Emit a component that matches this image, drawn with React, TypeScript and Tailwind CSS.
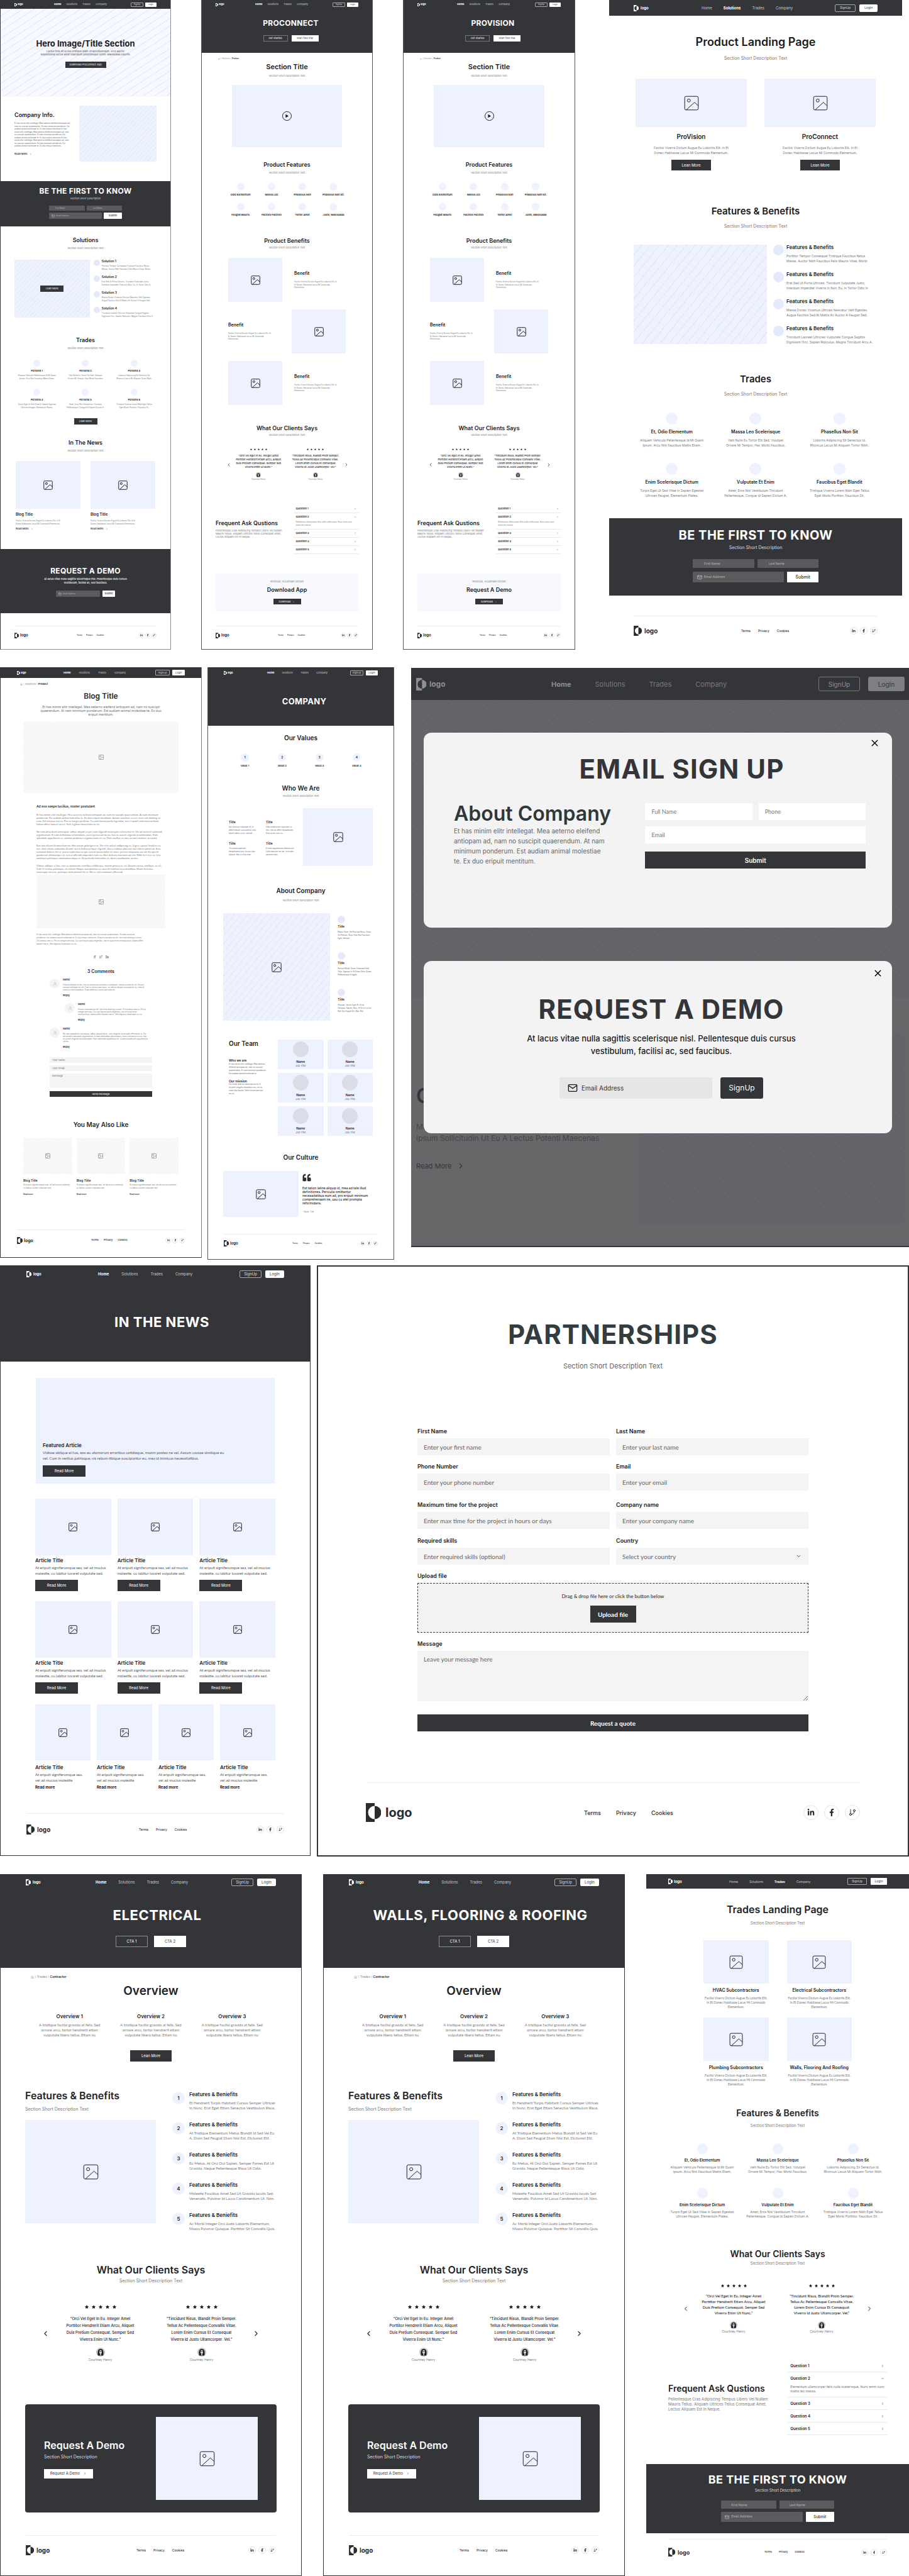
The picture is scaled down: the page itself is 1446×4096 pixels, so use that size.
import React from "react";
import { FiChevronDown, FiChevronLeft, FiChevronRight, FiChevronUp, FiFacebook, FiGitBranch, FiHome, FiLinkedin, FiMail, FiTwitter, FiUser, FiX } from "react-icons/fi";
import { FaFacebookF, FaLinkedinIn, FaPlay, FaQuoteLeft, FaStar } from "react-icons/fa";

/* ---------- size themes, one per artboard width ---------- */

type Theme = {
  bar: string; brand: string; mark: string; word: string; links: string; signup: string; login: string; actions: string;
  foot: string; footRow: string; footBrand: string; footMark: string; footWord: string; footLinks: string; social: string; socials: string;
};

const T272: Theme = {
  bar: "h-[14px] px-[22px]", brand: "w-[63px] gap-[1px]", mark: "w-[4px] h-[5px]", word: "text-[4px]", links: "gap-[8px] text-[4px] leading-[6px]",
  signup: "w-[20px] h-[7px] text-[3px] rounded-[1px]", login: "w-[18px] h-[7px] text-[3px] rounded-[1px]", actions: "gap-[3px]",
  foot: "mx-[22px] pt-[9px] pb-[17px]", footRow: "h-[10px]", footBrand: "w-[99px] gap-[2px]", footMark: "w-[7px] h-[9px]", footWord: "text-[6px]",
  footLinks: "gap-[6px] text-[3px]", social: "size-[8px] text-[4px]", socials: "gap-[2px]",
};
const T297: Theme = {
  ...T272,
  bar: "h-[17px] px-[25px]", brand: "w-[69px] gap-[1px]", mark: "w-[5px] h-[6px]", links: "gap-[12px] text-[4px] leading-[6px]",
  signup: "w-[21px] h-[8px] text-[4px] rounded-[1px]", login: "w-[19px] h-[8px] text-[4px] rounded-[1px]", actions: "gap-[4px]",
  foot: "mx-[25px] pt-[9px] pb-[20px]", footBrand: "w-[109px] gap-[2px]", footMark: "w-[8px] h-[10px]", footLinks: "gap-[8px] text-[3px]",
};
const T321: Theme = {
  ...T297,
  bar: "h-[17px] px-[26px]", brand: "w-[74px] gap-[1px]", links: "gap-[13px] text-[4px] leading-[6px]",
  signup: "w-[23px] h-[9px] text-[4px] rounded-[1px]", login: "w-[20px] h-[9px] text-[4px] rounded-[1px]",
  foot: "mx-[26px] pt-[10px] pb-[21px]", footRow: "h-[12px]", footBrand: "w-[118px] gap-[2px]", footMark: "w-[9px] h-[11px]", footWord: "text-[7px]",
  footLinks: "gap-[8px] text-[4px]", social: "size-[9px] text-[4px]",
};
const T418: Theme = {
  bar: "h-[23px] px-[35px]", brand: "w-[97px] gap-[2px]", mark: "w-[7px] h-[9px]", word: "text-[6px]", links: "gap-[18px] text-[5px] leading-[8px]",
  signup: "w-[31px] h-[11px] text-[5px] rounded-[1px]", login: "w-[26px] h-[11px] text-[5px] rounded-[1px]", actions: "gap-[6px]",
  foot: "mx-[35px] pt-[13px] pb-[31px]", footRow: "h-[14px]", footBrand: "w-[153px] gap-[4px]", footMark: "w-[11px] h-[14px]", footWord: "text-[9px]",
  footLinks: "gap-[11px] text-[4px]", social: "size-[11px] text-[5px]", socials: "gap-[4px]",
};
const T466: Theme = {
  ...T418,
  bar: "h-[25px] px-[39px]", brand: "w-[108px] gap-[3px]", mark: "w-[8px] h-[10px]", word: "text-[6px]", links: "gap-[18px] text-[6px] leading-[8px]",
  signup: "w-[33px] h-[12px] text-[5px] rounded-[2px]", login: "w-[29px] h-[12px] text-[5px] rounded-[2px]",
  foot: "mx-[39px] pt-[15px] pb-[21px]", footRow: "h-[16px]", footBrand: "w-[171px] gap-[4px]", footMark: "w-[13px] h-[16px]", footWord: "text-[10px]",
  footLinks: "gap-[12px] text-[5px]", social: "size-[12px] text-[6px]",
};
const T480: Theme = {
  ...T466,
  bar: "h-[26px] px-[40px]", brand: "w-[111px] gap-[3px]", links: "gap-[19px] text-[6px] leading-[8px]",
  signup: "w-[35px] h-[12px] text-[6px] rounded-[2px]", login: "w-[30px] h-[12px] text-[6px] rounded-[2px]",
  foot: "mx-[40px] pt-[15px] pb-[32px]", footBrand: "w-[176px] gap-[4px]",
};
const T494: Theme = {
  ...T480,
  bar: "h-[27px] px-[41px]", brand: "w-[114px] gap-[3px]", links: "gap-[20px] text-[6px] leading-[8px]",
  foot: "mx-[41px] pt-[17px] pb-[33px]", footBrand: "w-[179px] gap-[4px]",
};
const T942: Theme = {
  ...T494,
  foot: "mx-[76px] pt-[32px] pb-[53px]", footRow: "h-[30px]", footBrand: "w-[347px] gap-[7px]", footMark: "w-[24px] h-[30px]", footWord: "text-[20px]",
  footLinks: "gap-[24px] text-[9px]", social: "size-[24px] text-[12px]", socials: "gap-[9px]",
};

/* ---------- shared pieces ---------- */

function Mark({ className }: { className: string }) {
  return (
    <svg viewBox="0 0 24 30" className={`shrink-0 ${className}`} fill="currentColor" aria-hidden="true">
      <path d="M0 0h14v4.5a10.5 10.5 0 0 0 0 21V30H0z" />
      <path d="M14 4.5a10.5 10.5 0 0 1 0 21z" />
    </svg>
  );
}

function Nav({ t, active = "Home" }: { t: Theme; active?: string }) {
  return (
    <nav className={`flex items-center bg-[#343539] text-white ${t.bar}`}>
      <div className={`flex shrink-0 items-center font-bold leading-none ${t.brand}`}>
        <Mark className={t.mark} />
        <span className={t.word}>logo</span>
      </div>
      <div className={`flex ${t.links}`}>
        {["Home", "Solutions", "Trades", "Company"].map((l) => (
          <a key={l} href="#" className={l === active ? "font-bold text-white" : "text-[#c9c9cb]"}>{l}</a>
        ))}
      </div>
      <div className={`ml-auto flex ${t.actions}`}>
        <button className={`flex items-center justify-center border border-[#a9a9ab] leading-none text-[#dededf] ${t.signup}`}>SignUp</button>
        <button className={`flex items-center justify-center bg-white leading-none text-[#343539] ${t.login}`}>LogIn</button>
      </div>
    </nav>
  );
}

function Foot({ t, className = "" }: { t: Theme; className?: string }) {
  return (
    <footer className={className}>
      <div className={`border-t border-[#ededf0] text-[#2b2c30] ${t.foot}`}>
        <div className={`flex items-center ${t.footRow}`}>
          <div className={`flex shrink-0 items-center font-bold leading-none ${t.footBrand}`}>
            <Mark className={t.footMark} />
            <span className={t.footWord}>logo</span>
          </div>
          <div className={`flex font-medium leading-none ${t.footLinks}`}>
            <a href="#">Terms</a>
            <a href="#">Privacy</a>
            <a href="#">Cookies</a>
          </div>
          <div className={`ml-auto flex ${t.socials}`}>
            {[FaLinkedinIn, FaFacebookF, FiGitBranch].map((Icon, i) => (
              <a key={i} href="#" aria-label={["LinkedIn", "Facebook", "Git"][i]} className={`flex items-center justify-center rounded-full border border-[#e6e6e9] ${t.social}`}>
                <Icon />
              </a>
            ))}
          </div>
        </div>
      </div>
    </footer>
  );
}

function Lines({ t, className = "" }: { t: string[]; className?: string }) {
  return (
    <p className={className}>
      {t.map((l, i) => (
        <span key={i} className="block whitespace-nowrap">{l}</span>
      ))}
    </p>
  );
}

function PicIcon({ className }: { className: string }) {
  return (
    <svg viewBox="2 2 20 20" className={className} fill="none" stroke="currentColor" strokeLinejoin="round" aria-hidden="true">
      <rect x="3" y="3" width="18" height="18" rx="2" vectorEffect="non-scaling-stroke" />
      <circle cx="8.5" cy="8.5" r="2" vectorEffect="non-scaling-stroke" />
      <path d="M5 21 16 11l5 4.500" vectorEffect="non-scaling-stroke" />
    </svg>
  );
}

function Pic({ className, icon }: { className: string; icon?: string }) {
  return <div className={`flex items-center justify-center text-[#222] ${className}`}>{icon && <PicIcon className={icon} />}</div>;
}

function Btn({ className, children }: { className: string; children: React.ReactNode }) {
  return <button className={`flex items-center justify-center whitespace-nowrap leading-none ${className}`}>{children}</button>;
}

const DARK = "bg-[#343539] text-white";
const SOFT = "bg-[#eef2fe]";
const SUB = "Section Short Description Text";

function Face({ className }: { className: string }) {
  return (
    <svg viewBox="0 0 20 20" className={className} role="img" aria-label="Courtney Henry">
      <circle cx="10" cy="10" r="10" fill="#c4c4c6" />
      <path d="M4 18c-1-7-1-15 6-15s7 8 6 15z" fill="#1d1d1f" />
      <ellipse cx="10" cy="9.500" rx="3" ry="4" fill="#e4e4e6" />
      <path d="M6.800 8h6.400v1.400H6.800z" fill="#333" />
      <path d="M8.500 13h3v4h-3z" fill="#b5b5b7" />
    </svg>
  );
}

type QuoteSize = { wrap: string; arrow: string; star: string; stars: string; quote: string; face: string; name: string };

const QUOTES = [
  ["“Orci Vel Eget In Eu. Integer Amet", "Porttitor Hendrerit Etiam Arcu, Aliquet", "Duis Pretium Consequat. Semper Sed", "Viverra Enim Ut Nunc.”"],
  ["“Tincidunt Risus, Blandit Proin Semper.", "Tellus Ac Pellentesque Convallis Vitae.", "Lorem Enim Cursus Et Consequat", "Viverra Id Justo Ullamcorper. Vel.”"],
];

function Clients({ s }: { s: QuoteSize }) {
  return (
    <div className={`flex items-center text-[#222326] ${s.wrap}`}>
      <button aria-label="Previous" className={s.arrow}><FiChevronLeft /></button>
      {QUOTES.map((q, i) => (
        <figure key={i} className="flex w-0 flex-1 flex-col items-center text-center">
          <div className={`flex ${s.stars}`}>{[0, 1, 2, 3, 4].map((n) => <FaStar key={n} className={s.star} />)}</div>
          <Lines t={q} className={`font-medium ${s.quote}`} />
          <Face className={s.face} />
          <figcaption className={`text-[#77777b] ${s.name}`}>Courtney Henry</figcaption>
        </figure>
      ))}
      <button aria-label="Next" className={s.arrow}><FiChevronRight /></button>
    </div>
  );
}

type FaqSize = { wrap: string; left: string; title: string; text: string; row: string; head: string; body: string };

function Faq({ s }: { s: FaqSize }) {
  return (
    <div className={`grid ${s.wrap}`}>
      <div className={s.left}>
        <h2 className={`whitespace-nowrap font-semibold ${s.title}`}>Frequent Ask Qustions</h2>
        <Lines className={`text-[#77777b] ${s.text}`} t={["Pellentesque Cras Adipiscing Tempus Libero Vel Nullam", "Mauris Tellus. Aliquam Ultrices Tellus Consequat Amet,", "Lectus Aliquam Est In Neque."]} />
      </div>
      <div>
        {[1, 2, 3, 4, 5].map((n) => (
          <div key={n} className="border-b border-[#e8e8eb]">
            <button className={`flex w-full items-center justify-between font-semibold ${n === 2 ? s.head : s.row}`}>
              Question {n}
              {n === 2 ? <FiChevronUp /> : <FiChevronRight />}
            </button>
            {n === 2 && <Lines className={`text-[#77777b] ${s.body}`} t={["Elementum ullamcorper felis nulla scelerisque. Nunc enim nunc", "mattis leo massa."]} />}
          </div>
        ))}
      </div>
    </div>
  );
}

type KnowSize = { wrap: string; title: string; sub: string; form: string; row: string; small: string; big: string; mail: string; submit: string };

function Know({ s }: { s: KnowSize }) {
  const field = "min-w-0 rounded-[1px] bg-[#5b5b5e] text-white placeholder:text-[#b4b4b6] outline-none";
  return (
    <section className={`text-center ${DARK} ${s.wrap}`}>
      <h2 className={`whitespace-nowrap font-bold tracking-wide ${s.title}`}>BE THE FIRST TO KNOW</h2>
      <p className={`text-[#dcdcdd] ${s.sub}`}>Section Short Description</p>
      <form className={`mx-auto flex flex-col ${s.form}`}>
        <div className={`flex ${s.row}`}>
          <input aria-label="First Name" placeholder="First Name" className={`w-0 flex-1 ${field} ${s.small}`} />
          <input aria-label="Last Name" placeholder="Last Name" className={`w-0 flex-1 ${field} ${s.small}`} />
        </div>
        <div className={`flex ${s.row}`}>
          <label className={`flex flex-1 items-center ${field} ${s.big}`}>
            <FiMail className={`shrink-0 text-[#d0d0d2] ${s.mail}`} />
            <input aria-label="Email Address" placeholder="Email Address" className="w-0 min-w-0 flex-1 bg-transparent outline-none placeholder:text-[#b4b4b6]" />
          </label>
          <Btn className={`rounded-[1px] bg-white font-medium text-[#343539] ${s.submit}`}>Submit</Btn>
        </div>
      </form>
    </section>
  );
}

type TradeSize = { wrap: string; dot: string; title: string; text: string };

const TRADE_TEXT = [
  ["Aliquam Vehicula Pellentesque Id Mi Quam", "Ipsum. Arcu Nisl Faucibus Mattis Etiam."],
  ["Velit Nulla Eu Tortor Elit Sed. Volutpat", "Ornare Mi Tempor, Hac Morbi Faucibus."],
  ["Lobortis Adipiscing Sit Senectus Id.", "Rhoncus Lacus Mi Aliquam Tortor Nibh."],
  ["Turpis Eget Ut Sed Vitae In Sapien Egestas", "Ultrices Feugiat. Elementum Platea."],
  ["Amet, Eros Nisl Vestibulum Tincidunt", "Pellentesque. Congue Id Sapien Dictum A."],
  ["Tristique Viverra Lorem Nibh Eget Tellus", "Eget Morbi Porttitor. Faucibus Sit."],
];
const TRADES = ["Et, Odio Elementum", "Massa Leo Scelerisque", "Phasellus Non Sit", "Enim Scelerisque Dictum", "Vulputate Et Enim", "Faucibus Eget Blandit"];
const PERSONAS = ["Persona 1", "Persona 2", "Persona 3", "Persona 4", "Persona 5", "Persona 6"];

function TradeGrid({ s, titles }: { s: TradeSize; titles: string[] }) {
  return (
    <div className={`grid grid-cols-3 text-center ${s.wrap}`}>
      {titles.map((n, i) => (
        <div key={n} className="flex min-w-0 flex-col items-center">
          <div className={`rounded-full ${SOFT} ${s.dot}`} />
          <h3 className={`whitespace-nowrap font-semibold ${s.title}`}>{n}</h3>
          <Lines className={`text-[#77777b] ${s.text}`} t={TRADE_TEXT[i]} />
        </div>
      ))}
    </div>
  );
}

const BENEFIT_TEXT = [
  ["Porttitor Tempor Consequat Tristique Faucibus Netus", "Massa. Auctor Nibh Faucibus Felis Mauris Vitae. Morbi"],
  ["Erat Sed Ut Porta Ultrices. Tincidunt Vulputate Justo,", "Interdum Imperdiet Viverra In Non, Eu. In Tortor Odio In"],
  ["Massa Donec Vivamus Ultrices Nascetur Velit Egestas.", "Augue Facilisis Sed At Mattis Ac Auctor A Feugiat Sed."],
  ["Tincidunt Laoreet Ultricies Vulputate Congue Sagittis", "Dignissim Orci, Sapien Ridiculus. Magna Tincidunt Arcu A."],
];

const HOME_HATCH = "bg-[repeating-linear-gradient(147deg,#f7f9ff_0_9px,#dfe7f9_9px_10px)]";
const INFO_HATCH = "bg-[repeating-linear-gradient(133deg,#eef2fe_0_4px,#e2e9fa_4px_5px)]";
const WIDE_HATCH = "bg-[repeating-linear-gradient(129deg,#eef2fe_0_10px,#dce4f7_10px_11px)]";
const GRAY_HATCH = "bg-[repeating-linear-gradient(60deg,#f9f9f9_0_2px,#f5f5f5_2px_3px)]";

/* ---------- artboards ---------- */

function HomePage() {
  const h2 = "text-center text-[9px] leading-[11px] font-semibold";
  const sub = "mt-[5px] text-center text-[4px] leading-[6px] text-[#77777b]";
  return (
    <article className="border-b border-l border-r border-b-[#8c8c90] border-l-[#343539] border-r-[#8c8c90] bg-white">
      <Nav t={T272} />
      <section className={`flex flex-col items-center pt-[48px] pb-[45px] text-center ${HOME_HATCH}`}>
        <h1 className="whitespace-nowrap text-[13px] leading-[14px] font-bold">Hero Image/Title Section</h1>
        <Lines className="mt-[3px] text-[4px] leading-[5px] text-[#4b4b50]" t={["Luctus felis sit lectus tristique diam ornare bibendum. Arcu auctor", "suspendisse luctus amet bibendum pellentesque lorem. Malesuada lobortis."]} />
        <Btn className={`mt-[9px] h-[10px] w-[65px] text-[4px] ${DARK}`}>Download ProConnect App</Btn>
      </section>
      <section className="grid grid-cols-[103fr_123fr] px-[22px] pt-[15px] pb-[31px]">
        <div className="min-w-0 pt-[9px]">
          <h2 className="text-[9px] leading-[11px] font-semibold">Company Info.</h2>
          <Lines className="mt-[6px] text-[3px] leading-normal text-[#66666a]" t={["Et has minim elitr intellegat. Mea aeterno eleifend antiopam ad,", "nam no suscipit quaerendum. At nam minimum ponderum. Est", "audiam animal molestiae te. Ex duo eripuit mentitum.Et has", "minim elitr intellegat. Mea aeterno eleifend antiopam ad, nam", "no suscipit quaerendum. At nam minimum ponderum. Est", "audiam animal molestiae te. Ex duo eripuit mentitum.Et has", "minim elitr intellegat. Mea aeterno eleifend antiopam ad, nam", "no suscipit quaerendum. At nam minimum ponderum. Est", "audiam animal molestiae te. Ex duo eripuit mentitum."]} />
          <a href="#" className="mt-[8px] flex items-center gap-[3px] text-[4px] leading-[4px] font-medium">Read More <FiChevronRight className="size-[4px]" /></a>
        </div>
        <Pic className={`h-[89px] ${INFO_HATCH}`} />
      </section>
      <Know s={{ wrap: "pt-[10px] pb-[12px]", title: "text-[12px] leading-[12px]", sub: "mt-[3px] text-[4px] leading-[6px]", form: "mt-[8px] w-[43%] gap-[3px]", row: "gap-[3px]", small: "h-[8px] px-[10px] text-[3px]", big: "h-[10px] px-[4px] gap-[2px] text-[3px]", mail: "size-[5px]", submit: "w-[29px] text-[4px]" }} />
      <section className="pt-[16px]">
        <h2 className={h2}>Solutions</h2>
        <p className={sub}>{SUB}</p>
        <div className="mt-[15px] grid grid-cols-[123fr_103fr] gap-[6px] px-[22px]">
          <div className={`flex h-[92px] items-center justify-center ${INFO_HATCH}`}>
            <Btn className={`h-[10px] w-[37px] text-[4px] ${DARK}`}>Lean More</Btn>
          </div>
          <ul className="min-w-0">
            {BENEFIT_TEXT.map((b, i) => (
              <li key={i} className="flex h-[25px] gap-[3px]">
                <div className="size-[10px] shrink-0 rounded-full bg-[#e4eafc]" />
                <div>
                  <h3 className="text-[5px] leading-[5px] font-semibold">Solution {i + 1}</h3>
                  <Lines className="mt-[3px] text-[3px] leading-normal text-[#77777b]" t={b} />
                </div>
              </li>
            ))}
          </ul>
        </div>
      </section>
      <section className="pt-[22px]">
        <h2 className={h2}>Trades</h2>
        <p className={sub}>{SUB}</p>
        <TradeGrid titles={PERSONAS} s={{ wrap: "mt-[15px] px-[19px] gap-y-[14px]", dot: "size-[11px]", title: "mt-[4px] text-[4px] leading-[5px]", text: "mt-[3px] text-[3px] leading-normal" }} />
        <Btn className={`mx-auto mt-[15px] h-[10px] w-[37px] text-[4px] ${DARK}`}>Lean More</Btn>
      </section>
      <section className="pt-[23px] pb-[30px]">
        <h2 className={h2}>In The News</h2>
        <p className={sub}>{SUB}</p>
        <div className="mt-[13px] grid grid-cols-2 gap-[16px] px-[24px]">
          {[0, 1].map((i) => (
            <div key={i} className="min-w-0">
              <Pic className={`h-[76px] ${SOFT}`} icon="size-[15px]" />
              <h3 className="mt-[5px] text-[6px] leading-[8px] font-semibold">Blog Title</h3>
              <Lines className="mt-[4px] text-[3px] leading-normal text-[#77777b]" t={["Facilisi Viverra Dictum Augue Eu Lobortis Elit. In Et", "Donec Habitasse Lacus Mi Commodo Elementum."]} />
              <a href="#" className="mt-[4px] flex items-center gap-[3px] text-[4px] leading-[4px] font-medium">Read More <FiChevronRight className="size-[4px]" /></a>
            </div>
          ))}
        </div>
      </section>
      <section className={`flex flex-col items-center pt-[29px] pb-[26px] text-center ${DARK}`}>
        <h2 className="text-[12px] leading-[12px] font-bold tracking-wide">REQUEST A DEMO</h2>
        <Lines className="mt-[4px] text-[4px] leading-[6px] font-medium" t={["At lacus vitae nulla sagittis scelerisque nisl. Pellentesque duis cursus", "vestibulum, facilisi ac, sed faucibus."]} />
        <form className="mt-[9px] flex h-[10px] gap-[4px]">
          <label className="flex w-[70px] items-center gap-[2px] rounded-[1px] bg-[#5b5b5e] px-[4px] text-[3px]">
            <FiMail className="size-[5px] text-[#d0d0d2]" />
            <input aria-label="Email Address" placeholder="Email Address" className="w-0 flex-1 outline-none placeholder:text-[#b4b4b6]" />
          </label>
          <Btn className="w-[20px] rounded-[1px] bg-white text-[4px] font-medium text-[#343539]">Submit</Btn>
        </form>
      </section>
      <Foot t={T272} className="mt-[20px]" />
    </article>
  );
}

function Crumb({ className, a, b }: { className: string; a: string; b: string }) {
  return (
    <div className={`flex items-center whitespace-pre text-[#88888c] ${className}`}>
      <FiHome /> \ {a} \ <span className="font-semibold text-[#222]">{b}</span>
    </div>
  );
}

function ProductPage({ name, small, cta, button }: { name: string; small: string; cta: string; button: string }) {
  const h2 = "text-center text-[9px] leading-[11px] font-semibold";
  const sub = "text-center text-[4px] leading-[6px] text-[#77777b]";
  const benefit = ["Facilisi Viverra Dictum Augue Eu Lobortis Elit. In", "Et Donec Habitasse Lacus Mi Commodo", "Elementum."];
  return (
    <article className="border-b border-l border-r border-[#55565a] bg-white">
      <header className={`pb-[18px] ${DARK}`}>
        <Nav t={T272} />
        <div className="pl-[12px]">
          <h1 className="mt-[16px] text-center text-[12px] leading-[14px] font-bold tracking-wide">{name}</h1>
          <div className="mt-[12px] flex justify-center gap-[6px] text-[4px]">
            <Btn className="h-[10px] w-[39px] border border-[#77777b]">Get Started</Btn>
            <Btn className="h-[10px] w-[43px] bg-white text-[#343539]">Start free trial</Btn>
          </div>
        </div>
      </header>
      <Crumb className="pt-[7px] pl-[26px] text-[3px] leading-[4px]" a="Solutions" b="Product" />
      <h2 className="mt-[5px] text-center text-[11px] leading-[13px] font-semibold">Section Title</h2>
      <p className={`mt-[5px] ${sub}`}>{SUB}</p>
      <div className={`mx-[48px] mt-[11px] flex h-[99px] items-center justify-center ${SOFT}`}>
        <button aria-label="Play" className="flex size-[15px] items-center justify-center rounded-full border border-[#222] text-[5px] text-[#222]"><FaPlay /></button>
      </div>
      <h2 className={`mt-[22px] ${h2}`}>Product Features</h2>
      <p className={`mt-[5px] ${sub}`}>{SUB}</p>
      <div className="mx-[37px] mt-[13px] grid grid-cols-4 gap-y-[11px]">
        {["Odio Elementum", "Massa Leo", "Phasellus Non", "Phasellus Non Sit.", "Feugiat Mauris", "Facilisis Facilisis", "Tortor Amet", "Justo, Malesuada"].map((n) => (
          <div key={n} className="flex min-w-0 flex-col items-center">
            <div className={`size-[12px] rounded-full ${SOFT}`} />
            <h3 className="mt-[4px] whitespace-nowrap text-[4px] leading-[5px] font-semibold">{n}</h3>
          </div>
        ))}
      </div>
      <h2 className={`mt-[33px] ${h2}`}>Product Benefits</h2>
      <p className={`mt-[3px] ${sub}`}>{SUB}</p>
      <div className="mx-[42px] mt-[13px] flex flex-col gap-[12px]">
        {[0, 1, 2].map((i) => (
          <div key={i} className={i === 1 ? "flex flex-row-reverse" : "flex gap-[19px]"}>
            <Pic className={`h-[70px] w-[86px] shrink-0 ${SOFT}`} icon="size-[15px]" />
            <div className="w-0 flex-1 pt-[21px]">
              <h3 className="text-[7px] leading-[8px] font-semibold">Benefit</h3>
              <Lines className="mt-[7px] text-[3px] leading-normal text-[#77777b]" t={benefit} />
            </div>
          </div>
        ))}
      </div>
      <h2 className={`mt-[31px] ${h2}`}>What Our Clients Says</h2>
      <p className={`mt-[3px] ${sub}`}>{SUB}</p>
      <Clients s={{ wrap: "mx-[39px] mt-[18px]", arrow: "text-[8px] w-[6px]", stars: "gap-[3px]", star: "size-[3px]", quote: "mt-[6px] text-[4px] leading-[6px]", face: "mt-[5px] size-[8px]", name: "mt-[1px] text-[3px] leading-[4px]" }} />
      <Faq s={{ wrap: "mx-[22px] mt-[39px] grid-cols-[125fr_103fr]", left: "min-w-0 pt-[23px]", title: "text-[9px] leading-[11px]", text: "mt-[4px] text-[4px] leading-[5px]", row: "h-[12px] px-[3px] text-[4px] leading-none", head: "h-[12px] px-[3px] text-[4px] leading-none", body: "px-[3px] pb-[4px] text-[3px] leading-normal" }} />
      <section className="mx-[22px] mt-[31px] flex flex-col items-center rounded-[2px] bg-[#f8f9fe] pt-[10px] pb-[11px]">
        <p className="text-[4px] leading-[5px] text-[#77777b]">{small}</p>
        <h2 className={`mt-[5px] ${h2}`}>{cta}</h2>
        <Btn className={`mt-[9px] h-[9px] w-[44px] gap-[3px] text-[4px] ${DARK}`}>{button} <FiChevronRight /></Btn>
      </section>
      <Foot t={T272} className="mt-[23px]" />
    </article>
  );
}

const KNOW_466: KnowSize = { wrap: "pt-[16px] pb-[21px]", title: "text-[20px] leading-[22px]", sub: "mt-[4px] text-[7px] leading-[9px]", form: "mt-[14px] w-[43%] gap-[6px]", row: "gap-[5px]", small: "h-[14px] px-[18px] text-[5px]", big: "h-[17px] px-[7px] gap-[3px] text-[5px]", mail: "size-[8px]", submit: "w-[50px] text-[7px]" };
const KNOW_418: KnowSize = { wrap: "pt-[15px] pb-[18px]", title: "text-[18px] leading-[20px]", sub: "mt-[3px] text-[6px] leading-[8px]", form: "mt-[12px] w-[43%] gap-[5px]", row: "gap-[5px]", small: "h-[13px] px-[16px] text-[5px]", big: "h-[16px] px-[6px] gap-[3px] text-[5px]", mail: "size-[7px]", submit: "w-[45px] text-[6px]" };

function ProductLanding() {
  const h2 = "text-center text-[15px] leading-[19px] font-semibold";
  const sub = "mt-[10px] text-center text-[7px] leading-[9px] text-[#77777b]";
  return (
    <article className="ml-[6px] bg-white">
      <Nav t={T466} active="Solutions" />
      <h1 className="mt-[31px] text-center text-[18px] leading-[22px] font-semibold">Product Landing Page</h1>
      <p className={sub}>{SUB}</p>
      <div className="mx-[42px] mt-[28px] grid grid-cols-2 gap-[28px]">
        {["ProVision", "ProConnect"].map((n) => (
          <div key={n} className="flex min-w-0 flex-col items-center text-center">
            <Pic className={`h-[77px] w-full ${SOFT}`} icon="size-[24px]" />
            <h3 className="mt-[9px] text-[10px] leading-[12px] font-semibold">{n}</h3>
            <Lines className="mt-[8px] text-[5px] leading-[8px] text-[#77777b]" t={["Facilisi Viverra Dictum Augue Eu Lobortis Elit. In Et", "Donec Habitasse Lacus Mi Commodo Elementum."]} />
            <Btn className={`mt-[7px] h-[17px] w-[63px] text-[6px] ${DARK}`}>Lean More</Btn>
          </div>
        ))}
      </div>
      <h2 className={`mt-[55px] ${h2}`}>Features &amp; Benefits</h2>
      <p className={sub}>{SUB}</p>
      <div className="mx-[39px] mt-[25px] grid grid-cols-[212fr_166fr] gap-[10px]">
        <Pic className={`h-[158px] ${WIDE_HATCH}`} />
        <ul className="h-[158px] min-w-0">
          {BENEFIT_TEXT.map((b, i) => (
            <li key={i} className="flex h-[43px] gap-[4px]">
              <div className="size-[17px] shrink-0 rounded-full bg-[#e4eafc]" />
              <div>
                <h3 className="text-[8px] leading-[9px] font-semibold">Features &amp; Benefits</h3>
                <Lines className="mt-[5px] text-[5px] leading-[8px] text-[#77777b]" t={b} />
              </div>
            </li>
          ))}
        </ul>
      </div>
      <h2 className={`mt-[46px] ${h2}`}>Trades</h2>
      <p className={sub}>{SUB}</p>
      <TradeGrid titles={TRADES} s={{ wrap: "mx-[33px] mt-[25px] gap-y-[24px]", dot: "size-[19px]", title: "mt-[8px] text-[7px] leading-[8px]", text: "mt-[5px] text-[5px] leading-[8px]" }} />
      <div className="mt-[32px]"><Know s={KNOW_466} /></div>
      <Foot t={T466} className="mt-[32px]" />
    </article>
  );
}

function Comment({ lines, className = "" }: { lines: string[]; className?: string }) {
  return (
    <div className={`flex gap-[5px] ${className}`}>
      <div className="flex size-[16px] shrink-0 items-center justify-center rounded-full bg-[#f4f4f4] text-[7px] text-[#b9b9bb]"><FiUser /></div>
      <div>
        <h3 className="text-[4px] leading-[4px] font-semibold">Name</h3>
        <Lines className="mt-[4px] text-[3px] leading-[4px] text-[#77777b]" t={lines} />
        <a href="#" className="mt-[5px] block text-[4px] leading-[4px] font-semibold">Reply</a>
      </div>
    </div>
  );
}

function BlogPage() {
  const field = "bg-[#f4f4f4] px-[4px] text-[4px] outline-none placeholder:text-[#77777b]";
  return (
    <article className="border-b border-l border-r border-b-[#343539] border-l-[#343539] border-r-[#77777b] bg-white text-[#222d30]">
      <Nav t={T321} />
      <Crumb className="pt-[8px] pl-[31px] text-[4px] leading-[4px]" a="Solutions" b="Product" />
      <h1 className="mt-[10px] text-center text-[12px] leading-[14px] font-semibold">Blog Title</h1>
      <Lines className="mt-[7px] text-center text-[5px] leading-[6px] text-[#66707a]" t={["Et has minim elitr intellegat. Mea aeterno eleifend antiopam ad, nam no suscipit", "quaerendum. At nam minimum ponderum. Est audiam animal molestiae te. Ex duo", "eripuit mentitum."]} />
      <Pic className={`mx-[36px] mt-[8px] h-[114px] ${GRAY_HATCH}`} icon="size-[8px] text-[#999]" />
      <div className="mx-[57px] text-[#77777b]">
        <h2 className="mt-[18px] text-[5px] leading-[6px] font-semibold text-[#222d30]">Ad eos saepe lucilius, noster postulant</h2>
        <div className="mt-[8px] flex flex-col gap-[7px] font-[Lato] text-[4px] leading-[5px]">
          <Lines t={["Et has minim elitr intellegat. Mea aeterno eleifend antiopam ad, nam no suscipit quaerendum. At nam minimum", "ponderum. Est audiam animal molestiae te. Ex duo eripuit mentitum. Assum suavitate ea vel, vero erat doming cu", "eum. Zril ornatus sea cu. Pro ex integre pertinax. Cu cum harum paulo legendos, mei et quod enim mnesarchum,", "habeo affert laoreet sea ei. Velit legimus honestatis cu vis."]} />
          <Lines t={["No nam phaedrum consequat, adhuc aliquid ea pri, eum eligendi incorrupte referrentur in. Vix ad senserit salutandi", "argumentum. Ei eam definiebas reformidans, exerci persecuti no ius, has ne autem eligendi accommodare. Eam", "splendide appellantur et, summo prodesset argumentum vel ea. Dicit ancillae eu mei, an mel noluisse accusata."]} />
          <Lines t={["Eos tota dicunt democritum no. Has natum gubergren ne. Est viris soleat sadipscing cu. Legere epicuri insolens eu", "nec, dicit virtute urbanitas id nam, qui in habeo semper eligendi. Usu ea labitur placerat, mel ridens possit an. Esse", "euismod dolores his et, purus reptiemus cu qui. Lorem ipsum dolor sit amet, persius torquatos usu ad. Ea aperiri", "ponderum ullamcorper sit, verear offendit imperdiet nam eu, liber delicata tractatos ad vim. Nibh ferri nec ex. Usu", "nominavi patrioque conclusionemque in. Sit periculis instructior et, dicat repudiandae an mei."]} />
          <Lines t={["Vidisse oblique ei has, eos eu atomorum erroribus cotidieque, mazim postea ne vel. Assum causae similique eu vel.", "Cum in veritus patrioque, vis rebum tibique suscipiantur eu, mea id inimicus necessitatibus. Etiam delectus", "incorrupte mea ne, principes delicatissimi his in. His te velit nominavi efficiendi."]} />
        </div>
        <Pic className={`mt-[2px] h-[85px] ${GRAY_HATCH}`} icon="size-[8px] text-[#999]" />
        <Lines className="mt-[8px] text-[3px] leading-[5px]" t={["Et has minim elitr intellegat. Mea aeterno eleifend antiopam ad, nam no suscipit quaerendum. At nam minimum", "ponderum. Est audiam animal molestiae te. Ex duo eripuit mentitum. Assum suavitate ea vel, vero erat doming cu eum.", "Zril ornatus sea cu. Pro ex integre pertinax. Cu cum harum paulo legendos, mei et quod enim mnesarchum, habeo affert", "laoreet sea ei. Velit legimus honestatis cu vis."]} />
        <div className="mt-[15px] flex justify-center gap-[5px] text-[5px] text-[#444]">
          <a href="#" aria-label="Facebook"><FiFacebook /></a>
          <a href="#" aria-label="Twitter"><FiTwitter /></a>
          <a href="#" aria-label="LinkedIn"><FiLinkedin /></a>
        </div>
      </div>
      <div className="mx-[78px]">
        <h2 className="mt-[16px] text-center text-[7px] leading-[9px] font-semibold">3 Comments</h2>
        <div className="mt-[7px] flex flex-col gap-[10px]">
          <Comment lines={["Vidisse oblique ei has, eos eu atomorum erroribus cotidieque, mazim postea ne vel. Assum", "causae similique eu vel. Cum in veritus patrioque, vis rebum tibique suscipiantur eu, mea id", "inimicus necessitatibus. Etiam delectus incorrupte mea ne."]} />
          <Comment className="ml-[24px]" lines={["Assum suavitate ea vel, vero erat doming cu eum. Zril ornatus sea cu. Pro ex", "integre pertinax. Cu cum harum paulo legendos, mei et quod enim", "mnesarchum, habeo affert laoreet sea ei. Velit legimus honestatis cu vis."]} />
          <Comment lines={["No nam phaedrum consequat, adhuc aliquid ea pri, eum eligendi incorrupte referrentur in. Vix", "ad senserit salutandi argumentum. Ei eam definiebas reformidans, exerci persecuti no ius, has", "ne autem eligendi accommodare. Eam splendide appellantur et, summo prodesset argumentum", "vel ea."]} />
        </div>
        <form className="mt-[14px] flex flex-col gap-[4px]">
          <input aria-label="Your name" placeholder="Your name" className={`h-[9px] ${field}`} />
          <input aria-label="Your email" placeholder="Your email" className={`h-[9px] ${field}`} />
          <textarea aria-label="Message" placeholder="Message" className={`h-[22px] resize-none py-[2px] leading-[4px] ${field}`} />
          <Btn className={`mt-[2px] h-[9px] text-[4px] ${DARK}`}>Send message</Btn>
        </form>
      </div>
      <h2 className="mt-[38px] text-center text-[10px] leading-[12px] font-semibold">You May Also Like</h2>
      <div className="mx-[36px] mt-[15px] grid grid-cols-3 gap-[7px]">
        {[0, 1, 2].map((i) => (
          <div key={i} className="min-w-0">
            <Pic className={`h-[58px] ${GRAY_HATCH}`} icon="size-[8px] text-[#999]" />
            <h3 className="mt-[7px] text-[5px] leading-[6px] font-semibold">Blog Title</h3>
            <Lines className="mt-[2px] text-[3px] leading-normal text-[#77777b]" t={["At eripuit signiferumque sea, vel ad mucius molestie,", "cu labitur iuvaret vulputate sed."]} />
            <a href="#" className="mt-[6px] block text-[3px] leading-[4px] font-semibold">Read more</a>
          </div>
        ))}
      </div>
      <Foot t={T321} className="mt-[54px]" />
    </article>
  );
}

function CompanyPage() {
  const h2 = "text-center text-[10px] leading-[12px] font-semibold";
  const sub = "text-center text-[4px] leading-[5px] text-[#77777b]";
  const h3 = "text-[5px] leading-[5px] font-semibold";
  const body = "text-[3px] leading-[5px] text-[#66666a]";
  return (
    <article className="border-b border-l border-r border-[#55565a] bg-white">
      <header className={`pb-[31px] ${DARK}`}>
        <Nav t={T297} />
        <h1 className="mt-[29px] pl-[11px] text-center text-[13px] leading-[16px] font-bold tracking-wide">COMPANY</h1>
      </header>
      <h2 className={`mt-[13px] ${h2}`}>Our Values</h2>
      <div className="mx-[29px] mt-[19px] grid grid-cols-4">
        {[1, 2, 3, 4].map((n) => (
          <div key={n} className="flex flex-col items-center">
            <div className={`flex size-[13px] items-center justify-center rounded-full text-[5px] leading-none font-semibold ${SOFT}`}>{n}</div>
            <h3 className="mt-[4px] text-[4px] leading-[5px] font-semibold">Value {n}</h3>
          </div>
        ))}
      </div>
      <h2 className={`mt-[27px] ${h2}`}>Who We Are</h2>
      <p className={`mt-[4px] ${sub}`}>{SUB}</p>
      <div className="mx-[33px] mt-[17px] grid grid-cols-[118fr_111fr]">
        <div className="grid min-w-0 grid-cols-2 content-start gap-y-[11px] pt-[20px]">
          {[["Qui inimicus vulputate id, id", "debet fastidii suscipiantur sea.", "Quod ridens vis ei, sed ad."], ["Odio mediocrem suavitate cu", "nec, mei an affert eloquentiam.", "Duis unum cum cu."], ["Te summo aperiam", "theophrastus pro, no qui cibo", "ubique. Sea ut clita vitae"], ["Ei eam argumentum liberavisse.", "Liber epicurei no nec, ei eruditi", "oportere duo."]].map((l, i) => (
            <div key={i} className="min-w-0">
              <h3 className={h3}>Title</h3>
              <Lines className={`mt-[3px] ${body}`} t={l} />
            </div>
          ))}
        </div>
        <Pic className={`h-[92px] ${SOFT}`} icon="size-[16px]" />
      </div>
      <h2 className={`mt-[33px] ${h2}`}>About Company</h2>
      <p className={`mt-[7px] ${sub}`}>{SUB}</p>
      <div className="mx-[24px] mt-[18px] grid grid-cols-[171fr_65fr] gap-[12px]">
        <Pic className="h-[171px] bg-[repeating-linear-gradient(129deg,#eef2fe_0_7px,#dfe7f9_7px_8px)]" icon="size-[16px]" />
        <ul className="flex min-w-0 flex-col gap-[19px] pt-[4px]">
          {[["Mattis Amet, Vel Pulvinar Nunc, Diam.", "Sit Pretium, Nunc Erat Sed Faucibus", "Eget. Semper"], ["Rutrum Morbi Tortor Vulputate Sed", "Odio. Egestas In At Etiam Dolor Quam", "Pellentesque Fringilla"], ["Aliquam, Iaculis Eget Ac Urna", "Volutpat. Sapien, Non, Id Sit In Luctus", "Non Dui Augue Elit. Mac Nisl"]].map((l, i) => (
            <li key={i}>
              <div className="size-[12px] rounded-full bg-[#e4eafc]" />
              <h3 className={`mt-[3px] ${h3}`}>Title</h3>
              <Lines className={`mt-[4px] ${body}`} t={l} />
            </li>
          ))}
        </ul>
      </div>
      <div className="mx-[33px] mt-[30px] grid grid-cols-[78fr_151fr]">
        <div className="min-w-0">
          <h2 className="text-[10px] leading-[12px] font-semibold">Our Team</h2>
          <h3 className="mt-[18px] text-[5px] leading-[6px] font-semibold">Who we are</h3>
          <Lines className={`mt-[1px] ${body}`} t={["Et has minim elitr intellegat. Mea aeterno", "eleifend antiopam ad, nam no suscipit", "quaerendum. At nam minimum ponderum.", "Est audiam animal molestiae te."]} />
          <h3 className="mt-[6px] text-[5px] leading-[6px] font-semibold">Our mission</h3>
          <Lines className={body} t={["Vix modo alterum adversarium ei. Ei", "munere singulis rationibus usu, ius ex", "case cibo facete. Solet fuisset percipit", "ne vis."]} />
        </div>
        <div className="grid grid-cols-2 gap-[6px]">
          {[0, 1, 2, 3, 4, 5].map((i) => (
            <div key={i} className={`flex h-[47px] flex-col items-center pt-[3px] ${SOFT}`}>
              <div className="size-[25px] rounded-full bg-[#dadce6]" />
              <h3 className={`mt-[5px] ${h3}`}>Name</h3>
              <p className="mt-[2px] text-[4px] leading-[4px] text-[#66666a]">Job Title</p>
            </div>
          ))}
        </div>
      </div>
      <h2 className={`mt-[28px] ${h2}`}>Our Culture</h2>
      <div className="mx-[24px] mt-[16px] grid grid-cols-[120fr_121fr] gap-[6px]">
        <Pic className={`h-[73px] ${SOFT}`} icon="size-[16px]" />
        <div className="min-w-0 pt-[4px]">
          <FaQuoteLeft className="h-[13px] w-[14px] text-[#2b2c30]" />
          <Lines className="mt-[7px] text-[5px] leading-[6px] font-medium" t={["Est tation latine aliquip id, mea ad tale illud", "definitiones. Periculis omittantur", "necessitatibus eum ad, pro eripuit minimum", "comprehensam ne, usu cu stet prompta", "reformidans."]} />
          <p className="mt-[9px] text-[3px] leading-[4px] text-[#77777b]">- Name, Title</p>
        </div>
      </div>
      <Foot t={T297} className="mt-[27px]" />
    </article>
  );
}

function Modals() {
  const field = "min-w-0 bg-white px-[10px] font-[Lato] text-[9px] text-[#333] outline-none placeholder:text-[#77777b]";
  return (
    <article className="relative mt-[1px] ml-[18px] self-start border-b-2 border-[#343539] bg-[#67676a]">
      <nav className="flex h-[51px] items-center bg-[#343539] pr-[7px] pl-[8px]">
        <div className="flex w-[215px] shrink-0 items-center gap-[5px] text-[12px] leading-none font-bold text-[#8f8f91]">
          <Mark className="h-[20px] w-[16px]" />
          logo
        </div>
        <div className="flex gap-[38px] text-[11px] leading-[14px] text-[#78787b]">
          <a href="#" className="font-bold text-[#8f8f91]">Home</a>
          <a href="#">Solutions</a>
          <a href="#">Trades</a>
          <a href="#">Company</a>
        </div>
        <div className="ml-auto flex gap-[13px] text-[10px]">
          <Btn className="h-[23px] w-[66px] rounded-[3px] border border-[#77777a] text-[#8f8f91]">SignUp</Btn>
          <Btn className="h-[23px] w-[58px] rounded-[3px] bg-[#7f7f81] text-[#343539]">LogIn</Btn>
        </div>
      </nav>
      <div className="h-[475px] bg-[repeating-linear-gradient(142deg,#646569_0_40px,#5c5f68_40px_41px)]" />
      <section className="grid grid-cols-[354fr_423fr] pt-[55px] pr-[7px] pb-[33px] pl-[8px]">
        <div className="min-w-0 pt-[80px] text-[#343539]">
          <h2 className="text-[32px] leading-[40px] font-semibold">Company Info.</h2>
          <Lines className="mt-[20px] text-[12px] leading-[18px] text-[#434447]" t={["Morbi Tempus Facilisi Viverra Dictum Augue Eu", "Ipsum Sollicitudin Ut Eu A Lectus Potenti Maecenas"]} />
          <a href="#" className="mt-[28px] flex items-center gap-[8px] text-[11px] leading-[12px]">Read More <FiChevronRight className="size-[14px]" /></a>
        </div>
        <div className="h-[305px] bg-[repeating-linear-gradient(130deg,#63656b_0_20px,#5d6068_20px_21px)]" />
      </section>
      <div className="absolute inset-0 flex flex-col gap-[53px] pt-[103px] pr-[27px] pl-[20px]">
        <section className="relative h-[310px] rounded-[12px] bg-[#f3f3f3] pt-[37px] pr-[42px] pl-[48px]">
          <button aria-label="Close" className="absolute top-[8px] right-[19px] text-[17px] text-black"><FiX /></button>
          <h2 className="pl-[70px] text-center text-[42px] leading-[42px] font-bold tracking-wide text-[#343539]">EMAIL SIGN UP</h2>
          <div className="mt-[31px] grid grid-cols-[304fr_350fr]">
            <div className="min-w-0">
              <h3 className="text-[32px] leading-[38px] font-semibold text-[#2e373a]">About Company</h3>
              <Lines className="text-[10px] leading-[16px] text-[#66666a]" t={["Et has minim elitr intellegat. Mea aeterno eleifend", "antiopam ad, nam no suscipit quaerendum. At nam", "minimum ponderum. Est audiam animal molestiae", "te. Ex duo eripuit mentitum."]} />
            </div>
            <form className="flex flex-col pt-[2px]">
              <div className="grid grid-cols-2 gap-[10px]">
                <input aria-label="Full Name" placeholder="Full Name" className={`h-[27px] ${field}`} />
                <input aria-label="Phone" placeholder="Phone" className={`h-[27px] ${field}`} />
              </div>
              <input aria-label="Email" placeholder="Email" className={`mt-[10px] h-[27px] ${field}`} />
              <Btn className={`mt-[13px] h-[27px] text-[10px] font-semibold ${DARK}`}>Submit</Btn>
            </form>
          </div>
        </section>
        <section className="relative flex h-[274px] flex-col items-center rounded-[12px] bg-[#f3f3f3] pt-[56px] pl-[11px] text-center">
          <button aria-label="Close" className="absolute top-[11px] right-[14px] text-[17px] text-black"><FiX /></button>
          <h2 className="text-[42px] leading-[42px] font-bold tracking-wide text-[#343539]">REQUEST A DEMO</h2>
          <Lines className="mt-[15px] text-[13px] leading-[20px] font-medium" t={["At lacus vitae nulla sagittis scelerisque nisl. Pellentesque duis cursus", "vestibulum, facilisi ac, sed faucibus."]} />
          <form className="mt-[32px] flex h-[34px] gap-[13px]">
            <label className="flex w-[243px] items-center gap-[6px] rounded-[3px] bg-[#e6e6e6] px-[13px] text-[10px]">
              <FiMail className="size-[16px]" />
              <input aria-label="Email Address" placeholder="Email Address" className="w-0 flex-1 outline-none placeholder:text-[#343539]" />
            </label>
            <Btn className={`w-[68px] rounded-[3px] text-[12px] ${DARK}`}>SignUp</Btn>
          </form>
        </section>
      </div>
    </article>
  );
}

function NewsPage() {
  return (
    <article className="border-b border-l border-r border-[#343539] bg-white text-[#222326]">
      <header className={`pb-[50px] ${DARK}`}>
        <Nav t={T494} />
        <h1 className="mt-[50px] pl-[21px] text-center text-[22px] leading-[26px] font-bold tracking-wide">IN THE NEWS</h1>
      </header>
      <section className={`mx-[56px] mt-[26px] flex h-[168px] flex-col justify-end pb-[11px] pl-[11px] ${SOFT}`}>
        <h2 className="text-[8px] leading-[11px] font-semibold">Featured Article</h2>
        <Lines className="mt-[1px] font-[Lato] text-[6px] leading-[9px] text-[#55555a]" t={["Vidisse oblique ei has, eos eu atomorum erroribus cotidieque, mazim postea ne vel. Assum causae similique eu", "vel. Cum in veritus patrioque, vis rebum tibique suscipiantur eu, mea id inimicus necessitatibus."]} />
        <Btn className={`mt-[7px] h-[18px] w-[68px] text-[6px] ${DARK}`}>Read More</Btn>
      </section>
      <div className="mx-[55px] mt-[24px] grid grid-cols-3 gap-x-[10px] gap-y-[16px]">
        {[0, 1, 2, 3, 4, 5].map((i) => (
          <div key={i} className="min-w-0">
            <Pic className={`h-[90px] ${SOFT}`} icon="size-[14px]" />
            <h3 className="mt-[3px] text-[8px] leading-[10px] font-semibold">Article Title</h3>
            <Lines className="mt-[2px] font-[Lato] text-[6px] leading-[9px] text-[#55555a]" t={["At eripuit signiferumque sea, vel ad mucius", "molestie, cu labitur iuvaret vulputate sed."]} />
            <Btn className={`mt-[6px] h-[18px] w-[68px] text-[6px] ${DARK}`}>Read More</Btn>
          </div>
        ))}
      </div>
      <div className="mx-[55px] mt-[17px] grid grid-cols-4 gap-[10px]">
        {[0, 1, 2, 3].map((i) => (
          <div key={i} className="min-w-0">
            <Pic className={`h-[89px] ${SOFT}`} icon="size-[14px]" />
            <h3 className="mt-[6px] text-[8px] leading-[10px] font-semibold">Article Title</h3>
            <Lines className="mt-[2px] font-[Lato] text-[6px] leading-[9px] text-[#55555a]" t={["At eripuit signiferumque sea,", "vel ad mucius molestie"]} />
            <a href="#" className="mt-[3px] block text-[6px] leading-[7px] font-bold">Read more</a>
          </div>
        ))}
      </div>
      <Foot t={T494} className="mt-[38px]" />
    </article>
  );
}

function Field({ label, hint, className = "" }: { label: string; hint: string; className?: string }) {
  return (
    <label className={`block text-[9px] leading-[12px] font-semibold ${className}`}>
      {label}
      <input placeholder={hint} className="mt-[5px] block h-[27px] w-full bg-[#f4f4f4] px-[10px] font-[Lato] text-[10px] font-normal outline-none placeholder:text-[#66666a]" />
    </label>
  );
}

function Partnerships() {
  return (
    <article className="border-2 border-[#343539] bg-white text-[#222326]">
      <h1 className="mt-[86px] text-center text-[42px] leading-[44px] font-bold tracking-wide text-[#333d40]">PARTNERSHIPS</h1>
      <p className="mt-[21px] text-center text-[11px] leading-[14px] text-[#66666a]">{SUB}</p>
      <form className="mx-[158px] mt-[91px]">
        <div className="grid grid-cols-2 gap-x-[10px]">
          <Field label="First Name" hint="Enter your first name" />
          <Field label="Last Name" hint="Enter your last name" />
          <Field className="mt-[12px]" label="Phone Number" hint="Enter your phone number" />
          <Field className="mt-[12px]" label="Email" hint="Enter your email" />
          <Field className="mt-[17px]" label="Maximum time for the project" hint="Enter max time for the project in hours or days" />
          <Field className="mt-[17px]" label="Company name" hint="Enter your company name" />
          <Field className="mt-[13px]" label="Required skills" hint="Enter required skills (optional)" />
          <label className="relative mt-[13px] block text-[9px] leading-[12px] font-semibold">
            Country
            <select className="mt-[5px] block h-[27px] w-full appearance-none bg-[#f4f4f4] px-[10px] font-[Lato] text-[10px] font-normal text-[#66666a]">
              <option>Select your country</option>
            </select>
            <FiChevronDown className="absolute right-[11px] bottom-[9px] size-[9px]" />
          </label>
        </div>
        <p className="mt-[12px] text-[9px] leading-[12px] font-semibold">Upload file</p>
        <div className="mt-[5px] flex h-[79px] flex-col items-center border border-dashed border-[#343539] bg-[#f2f2f2] pt-[14px]">
          <p className="font-[Lato] text-[8px] leading-[12px]">Drag &amp; drop file here or click the button below</p>
          <Btn className={`mt-[9px] h-[27px] w-[73px] font-[Lato] text-[10px] font-bold ${DARK}`}>Upload file</Btn>
        </div>
        <label className="mt-[12px] block text-[9px] leading-[12px] font-semibold">
          Message
          <textarea placeholder="Leave your message here" className="mt-[5px] block h-[80px] w-full bg-[#f4f4f4] px-[10px] py-[7px] font-[Lato] text-[10px] font-normal outline-none placeholder:text-[#66666a]" />
        </label>
        <Btn className={`mt-[21px] h-[27px] w-full font-[Lato] text-[10px] font-bold ${DARK}`}>Request a quote</Btn>
      </form>
      <Foot t={T942} className="mt-[81px]" />
    </article>
  );
}

function TradePage({ name }: { name: string }) {
  return (
    <article className="border-b border-l border-r border-[#343539] bg-white text-[#222326]">
      <header className={`pb-[33px] ${DARK}`}>
        <Nav t={T480} />
        <h1 className="mt-[26px] pl-[20px] text-center text-[22px] leading-[26px] font-bold tracking-wide whitespace-nowrap">{name}</h1>
        <div className="mt-[20px] flex justify-center gap-[10px] text-[6px]">
          <Btn className="h-[18px] w-[51px] border border-[#8c8c90]">CTA 1</Btn>
          <Btn className="h-[18px] w-[51px] bg-white text-[#343539]">CTA 2</Btn>
        </div>
      </header>
      <Crumb className="pt-[11px] pl-[48px] text-[5px] leading-[6px]" a="Trades" b="Contractor" />
      <h2 className="mt-[9px] text-center text-[19px] leading-[22px] font-semibold">Overview</h2>
      <div className="mx-[45px] mt-[24px] grid grid-cols-3 text-center">
        {[1, 2, 3].map((n) => (
          <div key={n} className="flex min-w-0 flex-col items-center">
            <h3 className="text-[8px] leading-[10px] font-semibold">Overview {n}</h3>
            <Lines className="mt-[5px] font-[Lato] text-[6px] leading-[8px] text-[#77777b]" t={["A tristique facilisi gravida at felis. Sed", "ornare arcu, tortor hendrerit etiam", "vulputate libero tellus. Etiam nu"]} />
          </div>
        ))}
      </div>
      <Btn className={`mx-auto mt-[20px] h-[18px] w-[66px] text-[6px] ${DARK}`}>Lean More</Btn>
      <div className="mx-[39px] mt-[44px] grid grid-cols-[208fr_166fr] gap-[26px]">
        <div className="min-w-0">
          <h2 className="text-[16px] leading-[20px] font-semibold">Features &amp; Benefits</h2>
          <p className="mt-[8px] text-[7px] leading-[8px] text-[#77777b]">{SUB}</p>
          <Pic className={`mt-[13px] h-[164px] ${SOFT}`} icon="size-[25px]" />
        </div>
        <ol className="flex min-w-0 flex-col gap-[18px] pt-[4px]">
          {[["Et Hendrerit Turpis Habitant Cursus Semper Ultrices", "In Nunc. Erat Eget Etiam Senectus Vestibulum Risus."], ["At Tristique Elementum Metus Blandit Id Sed Vel Eu", "A. Diam Sed Feugiat Diam Nisi Est. Dictumst Elit."], ["Eu Metus, At Orci Dui Sapien. Semper Fames Est Ut", "Gravida. Neque Pellentesque Risus Ut Odio."], ["Molestie Faucibus Amet Sed Ut Gravida Iaculis Sed", "Venenatis. Pulvinar Id Lacus Condimentum Ut. Non."], ["Ac Morbi Integer Orci Justo Lobortis Elementum,", "Massa Pulvinar Quisque. Porttitor Sit Convallis Quis."]].map((l, i) => (
            <li key={i} className="flex gap-[7px]">
              <div className={`flex size-[20px] shrink-0 items-center justify-center rounded-full text-[8px] leading-none font-semibold ${SOFT}`}>{i + 1}</div>
              <div>
                <h3 className="whitespace-nowrap text-[8px] leading-[9px] font-semibold">Features &amp; Beniefits</h3>
                <Lines className="mt-[5px] font-[Lato] text-[6px] leading-[8px] text-[#77777b]" t={l} />
              </div>
            </li>
          ))}
        </ol>
      </div>
      <h2 className="mt-[51px] text-center text-[16px] leading-[20px] font-semibold">What Our Clients Says</h2>
      <p className="mt-[4px] text-center text-[7px] leading-[8px] text-[#77777b]">{SUB}</p>
      <Clients s={{ wrap: "mx-[65px] mt-[34px]", arrow: "text-[13px] w-[13px]", stars: "gap-[5px]", star: "size-[6px]", quote: "mt-[10px] text-[6px] leading-[11px]", face: "mt-[8px] size-[14px]", name: "mt-[2px] text-[5px] leading-[6px]" }} />
      <section className={`mx-[39px] mt-[68px] flex items-center justify-between rounded-[4px] px-[30px] py-[20px] ${DARK}`}>
        <div>
          <h2 className="text-[16px] leading-[20px] font-semibold">Request A Demo</h2>
          <p className="mt-[4px] text-[7px] leading-[9px] text-[#dcdcdd]">Section Short Description</p>
          <Btn className="mt-[15px] h-[15px] w-[78px] gap-[5px] bg-white text-[6px] text-[#343539]">Request A Demo <FiChevronRight /></Btn>
        </div>
        <Pic className={`h-[132px] w-[162px] ${SOFT}`} icon="size-[25px]" />
      </section>
      <Foot t={T480} className="mt-[36px]" />
    </article>
  );
}

function TradesLanding() {
  const h2 = "text-center text-[14px] leading-[16px] font-semibold";
  const sub = "text-center text-[6px] leading-[8px] text-[#77777b]";
  return (
    <article className="bg-white text-[#222326]">
      <Nav t={T418} active="Trades" />
      <h1 className="mt-[23px] text-center text-[16px] leading-[20px] font-semibold">Trades Landing Page</h1>
      <p className={`mt-[8px] ${sub}`}>{SUB}</p>
      <div className="mx-[91px] mt-[23px] grid grid-cols-2 gap-x-[29px] gap-y-[13px]">
        {["HVAC Subcontractors", "Electrical Subcontractors", "Plumbing Subcontractors", "Walls, Flooring And Roofing"].map((n) => (
          <div key={n} className="flex min-w-0 flex-col items-center text-center">
            <Pic className={`h-[69px] w-full ${SOFT}`} icon="size-[22px]" />
            <h3 className="mt-[7px] whitespace-nowrap text-[7px] leading-[8px] font-semibold">{n}</h3>
            <Lines className="mt-[5px] font-[Lato] text-[5px] leading-[7px] text-[#77777b]" t={["Facilisi Viverra Dictum Augue Eu Lobortis Elit.", "In Et Donec Habitasse Lacus Mi Commodo", "Elementum."]} />
          </div>
        ))}
      </div>
      <h2 className={`mt-[34px] ${h2}`}>Features &amp; Benefits</h2>
      <p className={`mt-[8px] ${sub}`}>{SUB}</p>
      <TradeGrid titles={TRADES} s={{ wrap: "mx-[29px] mt-[24px] gap-y-[22px]", dot: "size-[17px]", title: "mt-[6px] text-[6px] leading-[8px]", text: "mt-[4px] text-[5px] leading-[7px]" }} />
      <h2 className={`mt-[48px] ${h2}`}>What Our Clients Says</h2>
      <p className={`mt-[3px] ${sub}`}>{SUB}</p>
      <Clients s={{ wrap: "mx-[57px] mt-[29px]", arrow: "text-[12px] w-[12px]", stars: "gap-[4px]", star: "size-[5px]", quote: "mt-[9px] font-[Lato] text-[6px] leading-[9px]", face: "mt-[9px] size-[12px]", name: "mt-[1px] text-[5px] leading-[6px]" }} />
      <Faq s={{ wrap: "mx-[35px] mt-[42px] grid-cols-[191fr_157fr]", left: "min-w-0 pt-[38px]", title: "text-[14px] leading-[16px]", text: "mt-[5px] text-[6px] leading-[8px]", row: "h-[19px] px-[4px] text-[6px] leading-none", head: "h-[20px] px-[4px] text-[6px] leading-none", body: "px-[4px] pb-[5px] text-[5px] leading-[7px]" }} />
      <div className="mt-[46px]"><Know s={KNOW_418} /></div>
      <Foot t={T418} className="mt-[9px]" />
    </article>
  );
}

export default function App() {
  return (
    <main className="w-full overflow-hidden bg-white font-[Inter,sans-serif] text-[#1b1b1d] [font-optical-sizing:none]">
      <div className="grid grid-cols-[272fr_273fr_274fr_472fr] items-start gap-x-[48px] pr-[11px]">
        <HomePage />
        <ProductPage name="PROCONNECT" small="Rhoncus, Accumsan Dictum" cta="Download App" button="Download" />
        <ProductPage name="PROVISION" small="Rhoncus, Accumsan Dictum" cta="Request A Demo" button="Download" />
        <ProductLanding />
      </div>
      <div className="mt-[28px] grid grid-cols-[321fr_297fr_810fr] items-start gap-x-[9px]">
        <BlogPage />
        <CompanyPage />
        <Modals />
      </div>
      <div className="mt-[9px] grid grid-cols-[494fr_942fr] items-start gap-x-[10px]">
        <NewsPage />
        <Partnerships />
      </div>
      <div className="mt-[28px] grid grid-cols-[480fr_480fr_418fr] items-start gap-x-[34px]">
        <TradePage name="ELECTRICAL" />
        <TradePage name="WALLS, FLOORING & ROOFING" />
        <TradesLanding />
      </div>
    </main>
  );
}
